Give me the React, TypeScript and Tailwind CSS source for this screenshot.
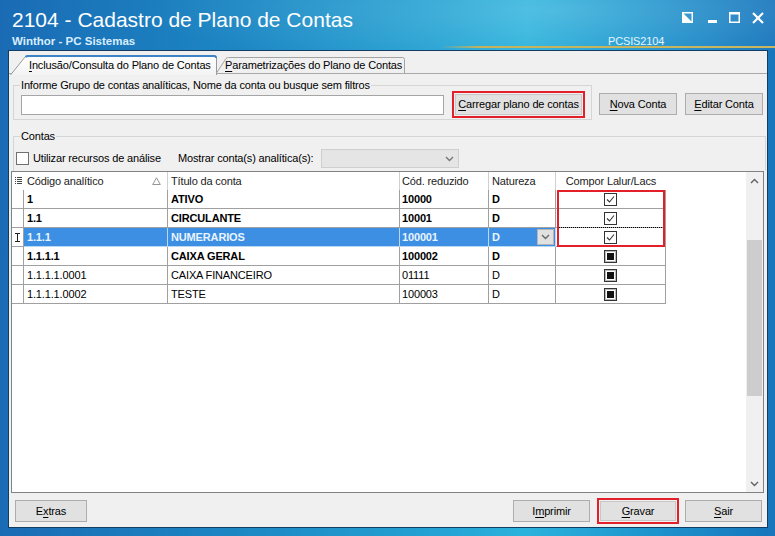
import React from "react";

const U = ({ children }: { children: React.ReactNode }) => (
  <span className="underline underline-offset-[2px] decoration-[1px]">{children}</span>
);

function Btn({ children, className = "" }: { children: React.ReactNode; className?: string }) {
  return (
    <div
      className={`flex items-center justify-center bg-[#e1e1e1] border border-[#adadad] text-[11px] leading-[13px] text-black whitespace-nowrap ${className}`}
    >
      {children}
    </div>
  );
}

function Checked() {
  return (
    <svg width="13" height="13" viewBox="0 0 13 13">
      <rect x="0.5" y="0.5" width="12" height="12" fill="#fff" stroke="#333" />
      <polyline points="3,6.5 5.5,9 10,3.5" fill="none" stroke="#333" strokeWidth="1.1" />
    </svg>
  );
}

function Indet() {
  return (
    <svg width="13" height="13" viewBox="0 0 13 13">
      <rect x="0.5" y="0.5" width="12" height="12" fill="#fff" stroke="#333" />
      <rect x="1.5" y="1.5" width="10" height="10" fill="none" stroke="#bbb" />
      <rect x="3" y="3" width="7" height="7" fill="#111" />
    </svg>
  );
}

function Chevron({ up = false, color = "#555" }: { up?: boolean; color?: string }) {
  return (
    <svg width="9" height="6" viewBox="0 0 9 6">
      <polyline
        points={up ? "1,5 4.5,1.5 8,5" : "1,1 4.5,4.5 8,1"}
        fill="none"
        stroke={color}
        strokeWidth="1.4"
      />
    </svg>
  );
}

type Row = {
  code: string;
  title: string;
  red: string;
  bold: boolean;
  checked: boolean;
  selected?: boolean;
};

const rows: Row[] = [
  { code: "1", title: "ATIVO", red: "10000", bold: true, checked: true },
  { code: "1.1", title: "CIRCULANTE", red: "10001", bold: true, checked: true },
  { code: "1.1.1", title: "NUMERARIOS", red: "100001", bold: true, checked: true, selected: true },
  { code: "1.1.1.1", title: "CAIXA GERAL", red: "100002", bold: true, checked: false },
  { code: "1.1.1.1.0001", title: "CAIXA FINANCEIRO", red: "01111", bold: false, checked: false },
  { code: "1.1.1.1.0002", title: "TESTE", red: "100003", bold: false, checked: false },
];

export default function App() {
  return (
    <div className="relative w-[775px] h-[536px] overflow-hidden font-['Liberation_Sans',Arial,sans-serif] text-[11px] tracking-[-0.15px] text-black bg-[linear-gradient(90deg,#1a6bb4_0%,#1c86c3_30%,#24a4d4_58%,#2bb2dc_68%,#1f98cf_82%,#1775bc_100%)]">
      {/* Title bar */}
      <div className="flex h-[50px] bg-[radial-gradient(ellipse_420px_60px_at_560px_10px,rgba(255,255,255,0.18),rgba(255,255,255,0))]">
        <div className="flex-1 pl-[12px] pt-[8px]">
          <div className="text-[21px] leading-[24px] tracking-normal text-white whitespace-nowrap">2104 - Cadastro de Plano de Contas</div>
          <div className="mt-[3px] text-[11.5px] leading-[13px] tracking-normal font-bold text-[#d8eeff]">Winthor - PC Sistemas</div>
        </div>
        <div className="w-[335px] flex flex-col">
          <div className="h-[36px] flex items-start pt-[12px]">
            <svg className="ml-[242px]" width="11" height="11" viewBox="0 0 11 11">
              <rect x="0.75" y="0.75" width="9.5" height="9.5" fill="none" stroke="#fff" strokeWidth="1.5" />
              <polygon points="0,0 11,11 0,11" fill="#fff" />
            </svg>
            <svg className="ml-[15px]" width="9" height="11" viewBox="0 0 9 11">
              <rect x="0" y="8" width="9" height="3" fill="#fff" />
            </svg>
            <svg className="ml-[12px]" width="11" height="11" viewBox="0 0 11 11">
              <rect x="0.75" y="1.25" width="9.5" height="9" fill="none" stroke="#fff" strokeWidth="1.5" />
              <rect x="0" y="0" width="11" height="2.5" fill="#fff" />
            </svg>
            <svg className="ml-[12px]" width="12" height="12" viewBox="0 0 12 12">
              <line x1="1" y1="1" x2="11" y2="11" stroke="#fff" strokeWidth="2.2" />
              <line x1="11" y1="1" x2="1" y2="11" stroke="#fff" strokeWidth="2.2" />
            </svg>
          </div>
          <div className="h-[10px] pl-[168px] text-[11px] leading-[10px] text-[#e4f5ff]">PCSIS2104</div>
          <div className="h-[2px] bg-[linear-gradient(90deg,rgba(198,180,92,0)_0%,#c4b25c_12%,#c8b660_100%)]"></div>
        </div>
      </div>

      {/* Content */}
      <div className="ml-[8px] w-[760px] h-[478px] border border-[#123c63] bg-[#f0f0f0] flex flex-col">
        {/* Tabs */}
        <div className="h-[22px] flex items-end pl-[1px] relative z-10">
          <div className="relative w-[207px] h-[19px] -mb-[1px] flex items-center">
            <svg className="absolute inset-0" width="207" height="20" viewBox="0 0 207 20">
              <defs>
                <linearGradient id="t1" x1="0" y1="0" x2="0" y2="1">
                  <stop offset="0" stopColor="#ffffff" />
                  <stop offset="1" stopColor="#f3f3f3" />
                </linearGradient>
              </defs>
              <path d="M0.5 20 L15 2 Q16 0.5 18 0.5 H204 Q206.5 0.5 206.5 3 V20" fill="url(#t1)" stroke="#9a9a9a" />
              <path d="M15.5 2 Q16.5 1 18.5 1 H204 Q206 1 206 3" fill="none" stroke="#3c84c6" strokeWidth="2" />
            </svg>
            <span className="relative pl-[19px] pt-[2px] text-[11px] leading-[13px] whitespace-nowrap">
              <U>I</U>nclusão/Consulta do Plano de Contas
            </span>
          </div>
          <div className="relative w-[189px] h-[16px] -ml-[1px] flex items-center">
            <svg className="absolute inset-0" width="189" height="16" viewBox="0 0 189 16">
              <path d="M0.5 16 L10 1.5 Q11 0.5 12.5 0.5 H186.5 Q188.5 0.5 188.5 2.5 V16" fill="#f0f0f0" stroke="#a3a3a3" />
            </svg>
            <span className="relative pl-[9px] pt-[1px] text-[11px] leading-[13px] whitespace-nowrap">
              <U>P</U>arametrizações do Plano de Contas
            </span>
          </div>
        </div>

        {/* Page */}
        <div className="flex-1 border-t border-[#a9a9a9] flex flex-col">
          {/* Row 1 */}
          <div className="flex items-start">
            <div className="ml-[4px] mt-[11px] w-[579px] h-[35px] border border-[#d5d5d5] flex flex-col">
              <div className="-mt-[7px] ml-[6px] px-[1px] w-fit bg-[#f0f0f0] leading-[13px] whitespace-nowrap">
                Informe Grupo de contas analíticas, Nome da conta ou busque sem filtros
              </div>
              <div className="-mt-[1px] ml-[7px] h-[27px] flex items-center">
                <div className="w-[423px] h-[20px] bg-white border border-[#a5a5a5]"></div>
                <div className="ml-[8px] w-[133px] h-[27px] border-2 border-[#e3202a] p-[1px]">
                  <Btn className="w-full h-full border-[#c8c8c8]">
                    <span>
                      <U>C</U>arregar plano de contas
                    </span>
                  </Btn>
                </div>
              </div>
            </div>
            <Btn className="ml-[7px] mt-[19px] w-[78px] h-[22px]">
              <span>
                <U>N</U>ova Conta
              </span>
            </Btn>
            <Btn className="ml-[8px] mt-[19px] w-[78px] h-[22px]">
              <span>
                <U>E</U>ditar Conta
              </span>
            </Btn>
          </div>

          {/* Contas group */}
          <div className="ml-[4px] mt-[16px] w-[753px] h-[35px] border-t border-l border-r border-[#d5d5d5] flex flex-col">
            <div className="-mt-[7px] ml-[6px] px-[1px] w-fit bg-[#f0f0f0] leading-[13px]">Contas</div>
            <div className="mt-[6px] h-[19px] flex items-center">
              <div className="w-[164px] flex items-center">
                <div className="ml-[2px] w-[13px] h-[13px] bg-white border border-[#707070]"></div>
                <span className="ml-[4px] leading-[13px] whitespace-nowrap">Utilizar recursos de análise</span>
              </div>
              <div className="w-[143px] leading-[13px] whitespace-nowrap">Mostrar conta(s) analítica(s):</div>
              <div className="w-[138px] h-[19px] bg-[#e5e5e5] border border-[#cfcfcf] flex items-center justify-end pr-[4px]">
                <Chevron color="#777" />
              </div>
            </div>
          </div>

          {/* Grid */}
          <div className="ml-[2px] w-[753px] h-[322px] border border-[#828282] flex">
            <div className="relative w-[734px] bg-white flex flex-col">
              {/* Header */}
              <div className="h-[18px] flex text-[11px] leading-[13px] text-[#222] whitespace-nowrap">
                <div className="w-[12px] flex items-center justify-center">
                  <svg width="7" height="8" viewBox="0 0 7 8">
                    <rect x="0" y="0" width="1" height="1" fill="#444" />
                    <rect x="2" y="0" width="5" height="1" fill="#444" />
                    <rect x="0" y="2" width="1" height="1" fill="#444" />
                    <rect x="2" y="2" width="5" height="1" fill="#444" />
                    <rect x="0" y="4" width="1" height="1" fill="#444" />
                    <rect x="2" y="4" width="5" height="1" fill="#444" />
                    <rect x="0" y="6" width="1" height="1" fill="#444" />
                    <rect x="2" y="6" width="5" height="1" fill="#444" />
                  </svg>
                </div>
                <div className="w-[144px] pl-[3px] flex items-center border-r border-[#d0d0d0]">
                  <span>Código analítico</span>
                  <svg className="ml-auto mr-[6px]" width="9" height="8" viewBox="0 0 9 8">
                    <polygon points="4.5,0.8 8.3,7.5 0.7,7.5" fill="none" stroke="#888" strokeWidth="0.9" />
                  </svg>
                </div>
                <div className="w-[232px] pl-[3px] flex items-center border-r border-[#d0d0d0]">Título da conta</div>
                <div className="w-[89px] pl-[2px] flex items-center border-r border-[#d0d0d0]">Cód. reduzido</div>
                <div className="w-[67px] pl-[3px] flex items-center border-r border-[#d0d0d0]">Natureza</div>
                <div className="w-[110px] flex items-center justify-center">Compor Lalur/Lacs</div>
              </div>

              {/* Rows */}
              {rows.map((r, i) => {
                const sel = !!r.selected;
                const txt = `${r.bold ? "font-bold" : ""} ${sel ? "text-[#e8f4ff]" : "text-black"}`;
                const selBg = sel ? "bg-[#3d8fe3] border-[#bcd7f2]" : "border-[#a0a0a0]";
                return (
                  <div key={i} className="h-[19px] flex text-[11px] leading-[13px] whitespace-nowrap">
                    <div className="w-[12px] border-r border-b border-[#a0a0a0] flex items-center justify-center">
                      {sel && (
                        <svg width="5" height="9" viewBox="0 0 5 9">
                          <line x1="0" y1="0.5" x2="5" y2="0.5" stroke="#222" />
                          <line x1="2.5" y1="0.5" x2="2.5" y2="8.5" stroke="#222" />
                          <line x1="0" y1="8.5" x2="5" y2="8.5" stroke="#222" />
                        </svg>
                      )}
                    </div>
                    <div className={`w-[144px] pl-[3px] flex items-center border-r border-b ${selBg} ${txt}`}>{r.code}</div>
                    <div className={`w-[232px] pl-[3px] flex items-center border-r border-b ${selBg} ${txt}`}>{r.title}</div>
                    <div className={`w-[89px] pl-[2px] flex items-center border-r border-b ${selBg} ${txt}`}>{r.red}</div>
                    <div className={`w-[67px] pl-[3px] flex items-center border-r border-b ${selBg} ${txt}`}>
                      <span>D</span>
                      {sel && (
                        <div className="ml-auto mr-[1px] w-[17px] h-[16px] bg-[#e1e1e1] border border-[#b5b5b5] flex items-center justify-center">
                          <Chevron color="#666" />
                        </div>
                      )}
                    </div>
                    <div className="relative w-[110px] flex items-center justify-center border-r border-b border-[#a0a0a0]">
                      {sel && <div className="absolute left-[1px] right-[1px] -top-[1px] border-t border-dotted border-black"></div>}
                      {r.checked ? <Checked /> : <Indet />}
                    </div>
                  </div>
                );
              })}

              {/* Red highlight over checkboxes */}
              <div className="absolute left-[545px] top-[18px] w-[108px] h-[57px] border-2 border-[#e3202a]"></div>
            </div>

            {/* Scrollbar */}
            <div className="w-[17px] bg-[#f0f0f0] flex flex-col">
              <div className="h-[17px] flex items-center justify-center">
                <Chevron up color="#606060" />
              </div>
              <div className="flex-1">
                <div className="mt-[51px] ml-[1px] w-[15px] h-[156px] bg-[#cdcdcd]"></div>
              </div>
              <div className="h-[17px] flex items-center justify-center">
                <Chevron color="#606060" />
              </div>
            </div>
          </div>

          {/* Bottom buttons */}
          <div className="mt-[5px] h-[26px] flex items-center">
            <Btn className="ml-[6px] w-[72px] h-[22px]">
              <span>
                E<U>x</U>tras
              </span>
            </Btn>
            <Btn className="ml-[426px] w-[77px] h-[22px]">
              <span>
                I<U>m</U>primir
              </span>
            </Btn>
            <div className="ml-[7px] w-[82px] h-[26px] border-2 border-[#e3202a] p-[1px]">
              <Btn className="w-full h-full border-[#c8c8c8]">
                <span>
                  <U>G</U>ravar
                </span>
              </Btn>
            </div>
            <Btn className="ml-[6px] w-[77px] h-[22px]">
              <span>
                <U>S</U>air
              </span>
            </Btn>
          </div>
        </div>
      </div>
    </div>
  );
}
